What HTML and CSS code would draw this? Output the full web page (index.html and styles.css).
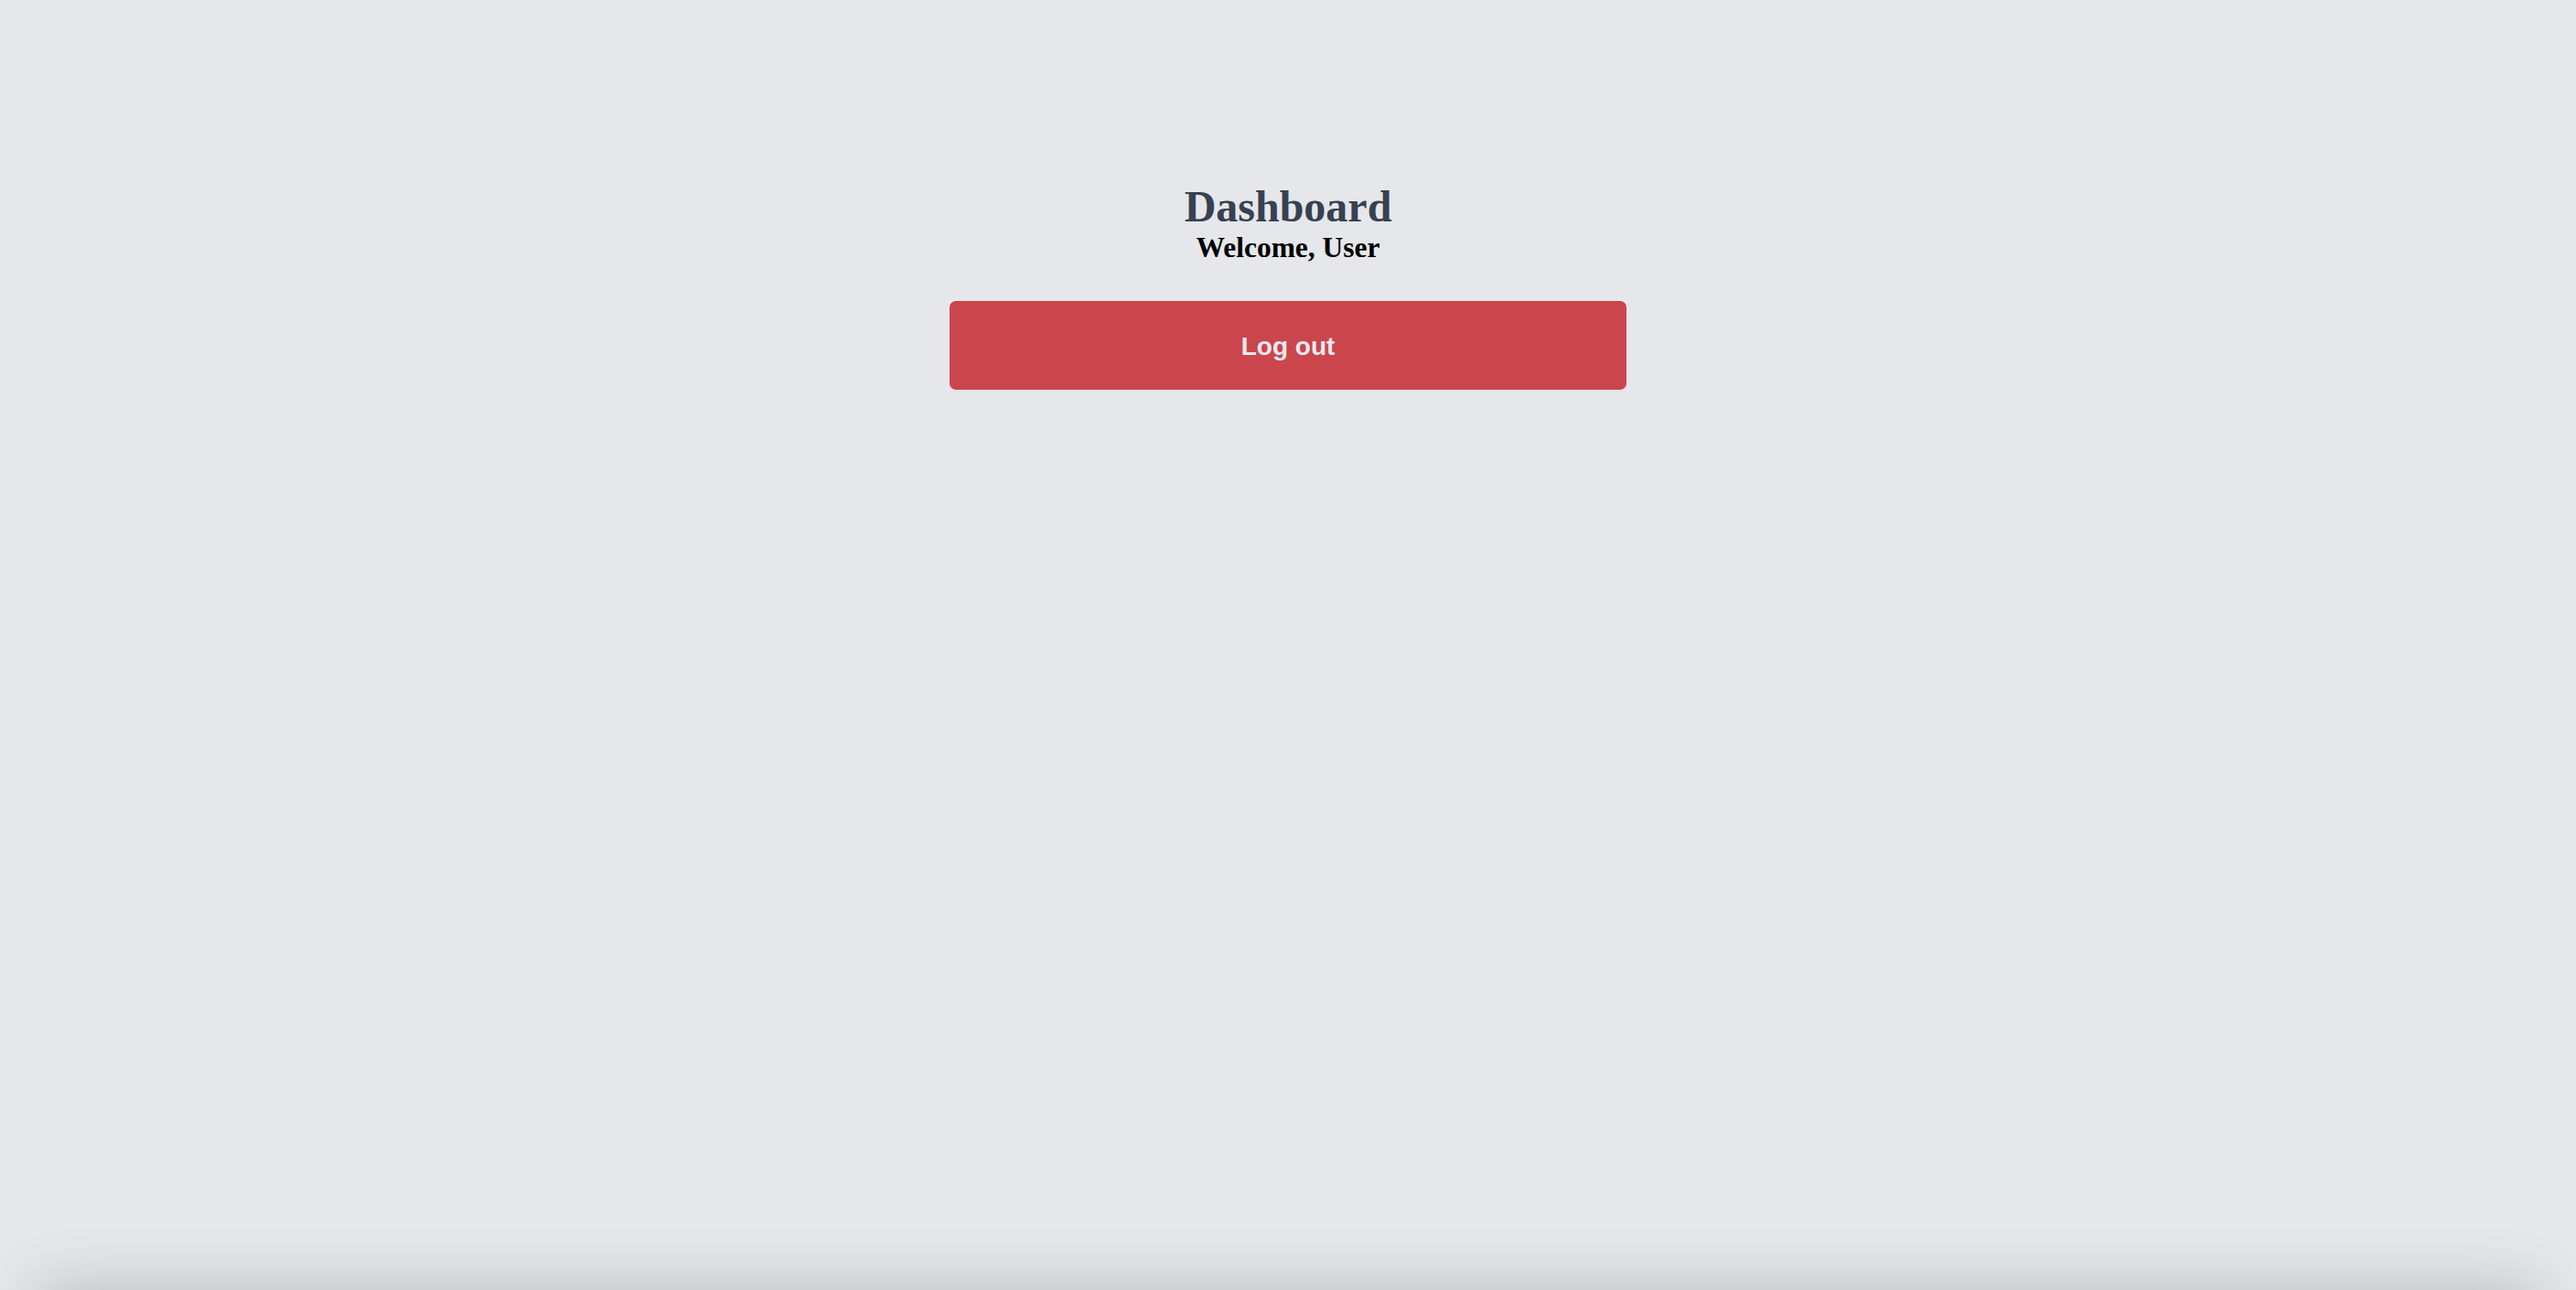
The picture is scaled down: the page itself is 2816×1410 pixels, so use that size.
FILE: index.html
```html
<!DOCTYPE html>
<html lang="en">
<head>
<meta charset="utf-8">
<title>Dashboard</title>
<link rel="stylesheet" href="styles.css">
</head>
<body>
<main class="page">
  <section class="dashboard">
    <h1 class="title">Dashboard</h1>
    <h2 class="welcome">Welcome, User</h2>
    <button class="logout" type="button">Log out</button>
  </section>
</main>
<div class="below"></div>
</body>
</html>
```
FILE: styles.css
```css
html, body {
  margin: 0;
  padding: 0;
  overflow: hidden;
  background: #e5e7eb;
}
.page {
  min-height: 100vh;
  display: flex;
  justify-content: center;
}
.dashboard {
  width: 740px;
  padding-top: 198px;
  display: flex;
  flex-direction: column;
  align-items: center;
}
.title {
  margin: 0;
  font-family: "Liberation Serif", "Times New Roman", serif;
  font-weight: 700;
  font-size: 48px;
  line-height: 56px;
  color: #374151;
}
.welcome {
  margin: 0;
  font-family: "Liberation Serif", "Times New Roman", serif;
  font-weight: 700;
  font-size: 31.5px;
  line-height: 33px;
  color: #000;
}
.logout {
  margin-top: 42px;
  width: 740px;
  height: 97px;
  border: 0;
  border-radius: 7px;
  background: #cb454c;
  color: #e6e9f2;
  font-family: "Liberation Sans", Arial, sans-serif;
  font-weight: 700;
  font-size: 28px;
  padding: 2px 0 0;
  cursor: pointer;
}
.below {
  height: 200px;
  margin: 0 40px;
  background: #e5e7eb;
  box-shadow: 0 0 70px rgba(0, 0, 0, 0.2);
}
```
